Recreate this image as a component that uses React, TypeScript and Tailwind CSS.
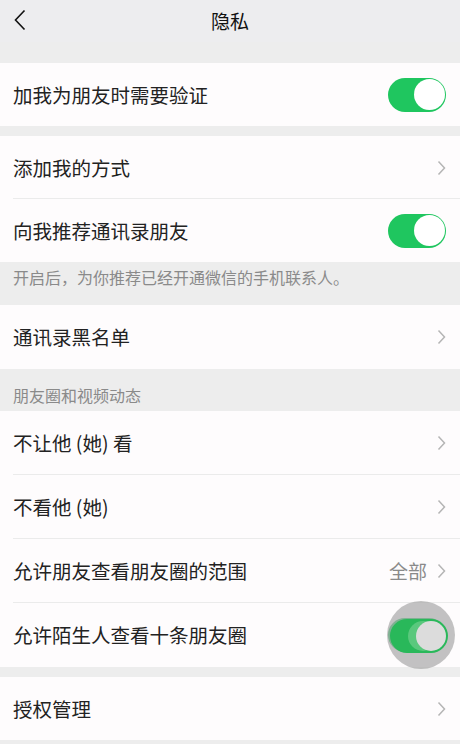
import React from "react";

const font = { fontFamily: '"Noto Sans CJK SC", "Noto Sans", sans-serif' };

function Chevron() {
  return (
    <svg width="9" height="16" viewBox="0 0 9 16" className="shrink-0">
      <path d="M1.5 1.5 L7.5 8 L1.5 14.5" fill="none" stroke="#b5b5b5" strokeWidth="1.5" />
    </svg>
  );
}

function Toggle() {
  return (
    <div className="flex h-[34px] w-[58px] items-center justify-end rounded-full bg-[#1fc65f] p-[1.5px]">
      <div className="h-[31px] w-[31px] rounded-full bg-white" />
    </div>
  );
}

function Row({
  label,
  right,
  divider,
  h = "h-[64px]",
}: {
  label: string;
  right: React.ReactNode;
  divider?: boolean;
  h?: string;
}) {
  return (
    <div className={`relative flex ${h} items-center justify-between bg-[#fefcfd] pl-[13px] pr-[14px]`}>
      <span className="text-[19.5px] text-[#222]">{label}</span>
      {right}
      {divider && <div className="absolute bottom-0 left-[13px] right-0 h-px bg-[#ebebeb]" />}
    </div>
  );
}

export default function App() {
  return (
    <div className="h-[744px] w-[460px] overflow-hidden bg-[#ededed]" style={font}>
      <div className="relative flex h-[42px] items-center justify-center bg-[#ededef]">
        <svg width="14" height="22" viewBox="0 0 14 22" className="absolute left-[13px] top-[9px]">
          <path d="M11.5 1.5 L2.5 11 L11.5 20.5" fill="none" stroke="#111" strokeWidth="1.6" />
        </svg>
        <span className="text-[19px] text-[#111]">隐私</span>
      </div>
      <div className="h-[21px]" />
      <Row label="加我为朋友时需要验证" right={<Toggle />} h="h-[63px]" />
      <div className="h-[10px]" />
      <Row label="添加我的方式" right={<Chevron />} divider h="h-[63px]" />
      <Row label="向我推荐通讯录朋友" right={<Toggle />} h="h-[63px]" />
      <div className="flex h-[43px] items-start px-[13px] pt-[3px]">
        <span className="text-[16px] text-[#8a8a8a]">开启后，为你推荐已经开通微信的手机联系人。</span>
      </div>
      <Row label="通讯录黑名单" right={<Chevron />} />
      <div className="flex h-[42px] items-end px-[13px] pb-[4px]">
        <span className="text-[16px] text-[#8a8a8a]">朋友圈和视频动态</span>
      </div>
      <Row label="不让他 (她) 看" right={<Chevron />} divider />
      <Row label="不看他 (她)" right={<Chevron />} divider />
      <Row
        label="允许朋友查看朋友圈的范围"
        right={
          <div className="flex items-center gap-[10px]">
            <span className="text-[19px] text-[#8a8a8a]">全部</span>
            <Chevron />
          </div>
        }
        divider
      />
      <div className="relative">
        <Row label="允许陌生人查看十条朋友圈" right={<Toggle />} />
        <div className="absolute left-[387px] top-[-2px] h-[68px] w-[68px] rounded-full bg-[#a8a8a8]/70" />
        <div className="absolute left-[390px] top-[16px] flex h-[34px] w-[58px] items-center justify-end rounded-full bg-[#29b85a] p-[2px]">
          <div className="mr-[8px] h-[30px] w-[30px] rounded-full bg-[#6fcf8c]/70" />
          <div className="absolute right-[2px] h-[30px] w-[30px] rounded-full bg-[#dcdcdc]" />
        </div>
      </div>
      <div className="h-[10px]" />
      <Row label="授权管理" right={<Chevron />} h="h-[63px]" />
    </div>
  );
}
